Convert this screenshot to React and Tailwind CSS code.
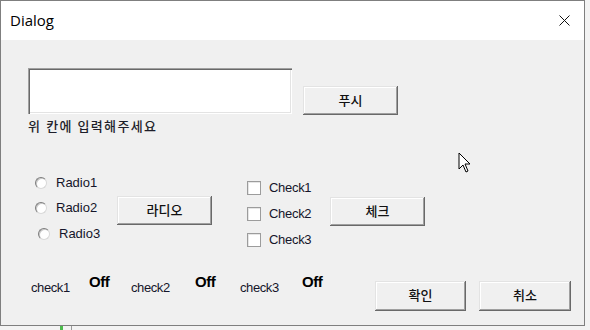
import { useState } from 'react';

const font = { fontFamily: '"Liberation Sans", "Noto Sans CJK KR", sans-serif' };

// classic win32 raised button
function Btn({ label, className = '' }) {
  return (
    <button
      className={`flex items-center justify-center bg-[#f0f0f0] text-[13px] font-medium text-[#111] shadow-[inset_-1px_-1px_0_#696969,inset_1px_1px_0_#e3e3e3,inset_-2px_-2px_0_#a0a0a0,inset_2px_2px_0_#ffffff] ${className}`}
    >
      {label}
    </button>
  );
}

function Radio({ label, checked, onClick, className = '' }) {
  return (
    <div className={`flex items-center h-[25px] cursor-default ${className}`} onClick={onClick}>
      <span className="w-[12px] h-[12px] rounded-full bg-white border border-[#7c7c7c] border-b-[#d8d8d8] border-r-[#d8d8d8] shadow-[inset_1px_1px_0_#c8c8c8] flex items-center justify-center">
        {checked && <span className="w-[4px] h-[4px] rounded-full bg-[#222]" />}
      </span>
      <span className="ml-[9px] text-[13px] text-[#15152a]">{label}</span>
    </div>
  );
}

function Check({ label, checked, onClick }) {
  return (
    <div className="flex items-center h-[26px] cursor-default" onClick={onClick}>
      <span className="w-[14px] h-[14px] bg-white border border-[#9c9c9c] shadow-[inset_1px_1px_0_#e6e6e6] flex items-center justify-center text-[10px] leading-none">
        {checked && '✓'}
      </span>
      <span className="ml-[8px] text-[13px] text-[#15152a] tracking-[-0.3px]">{label}</span>
    </div>
  );
}

export default function App() {
  const [radio, setRadio] = useState(null);
  const [checks, setChecks] = useState([false, false, false]);

  const toggle = (i) => setChecks(checks.map((c, j) => (j === i ? !c : c)));

  return (
    <div className="w-[590px] h-[330px] bg-[#f3f3f3] overflow-hidden relative" style={font}>
      <div className="w-[585px] h-[326px] border border-[#7f7f7f] bg-[#f0f0f0] flex flex-col">
        {/* title bar */}
        <div className="h-[39px] bg-white flex items-center pl-[9px] pr-[12px] shrink-0">
          <span className="text-[15px] text-black" style={{ fontFamily: '"Open Sans", "Noto Sans", sans-serif' }}>
            Dialog
          </span>
          <svg className="ml-auto mr-[2px]" width="11" height="11" viewBox="0 0 11 11">
            <path d="M0.5 0.5 L10.5 10.5 M10.5 0.5 L0.5 10.5" stroke="#111" strokeWidth="1" />
          </svg>
        </div>

        <div className="flex-1 flex flex-col">
          {/* text input row */}
          <div className="flex items-start pl-[27px] pt-[28px]">
            <div className="flex flex-col">
              <div className="w-[264px] h-[46px] bg-white shadow-[inset_1px_1px_0_#a0a0a0,inset_2px_2px_0_#696969,inset_-1px_-1px_0_#ffffff,inset_-2px_-2px_0_#e3e3e3]" />
              <span className="mt-[5px] text-[13px] leading-[15px] font-medium text-[#1e1e2a] tracking-[1.3px]">위 칸에 입력해주세요</span>
            </div>
            <Btn label="푸시" className="ml-[11px] mt-[18px] w-[95px] h-[29px]" />
          </div>

          {/* radio / check row */}
          <div className="flex items-start mt-[36px]">
            <div className="w-[116px] pl-[34px] flex flex-col">
              <Radio label="Radio1" checked={radio === 0} onClick={() => setRadio(0)} />
              <Radio label="Radio2" checked={radio === 1} onClick={() => setRadio(1)} />
              <Radio label="Radio3" className="ml-[3px] mt-[1px]" checked={radio === 2} onClick={() => setRadio(2)} />
            </div>
            <Btn label="라디오" className="mt-[26px] w-[95px] h-[29px]" />
            <div className="w-[83px] ml-[35px] mt-[5px] flex flex-col">
              <Check label="Check1" checked={checks[0]} onClick={() => toggle(0)} />
              <Check label="Check2" checked={checks[1]} onClick={() => toggle(1)} />
              <Check label="Check3" checked={checks[2]} onClick={() => toggle(2)} />
            </div>
            <Btn label="체크" className="mt-[27px] w-[95px] h-[29px]" />
          </div>

          {/* status row */}
          <div className="flex items-start mt-[17px] pl-[30px] pr-[13px]">
            <span className="w-[58px] mt-[8px] text-[13px] text-[#15152a] tracking-[-0.4px]">check1</span>
            <span className="w-[42px] mt-[1px] text-[15px] font-bold text-black tracking-[-0.5px]">{checks[0] ? 'On' : 'Off'}</span>
            <span className="w-[64px] mt-[8px] text-[13px] text-[#15152a] tracking-[-0.4px]">check2</span>
            <span className="w-[45px] mt-[1px] text-[15px] font-bold text-black tracking-[-0.5px]">{checks[1] ? 'On' : 'Off'}</span>
            <span className="w-[62px] mt-[8px] text-[13px] text-[#15152a] tracking-[-0.4px]">check3</span>
            <span className="mt-[1px] text-[15px] font-bold text-black tracking-[-0.5px]">{checks[2] ? 'On' : 'Off'}</span>
            <Btn label="확인" className="ml-auto mt-[11px] w-[91px] h-[30px]" />
            <Btn label="취소" className="ml-[13px] mt-[11px] w-[92px] h-[30px]" />
          </div>
        </div>
      </div>

      {/* bits of the window behind */}
      <div className="absolute left-[60px] top-[326px] w-[3px] h-[4px] bg-[#4cbb4c]" />
      <div className="absolute left-[71px] top-[326px] w-[1px] h-[4px] bg-[#9a9a9a]" />

      {/* mouse cursor */}
      <svg className="absolute left-[458px] top-[152px]" width="14" height="22" viewBox="0 0 14 22">
        <path d="M1 1 L1 17 L5 13 L8 20 L10 19 L7 12 L12 12 Z" fill="white" stroke="black" strokeWidth="1" strokeLinejoin="miter" />
      </svg>
    </div>
  );
}
